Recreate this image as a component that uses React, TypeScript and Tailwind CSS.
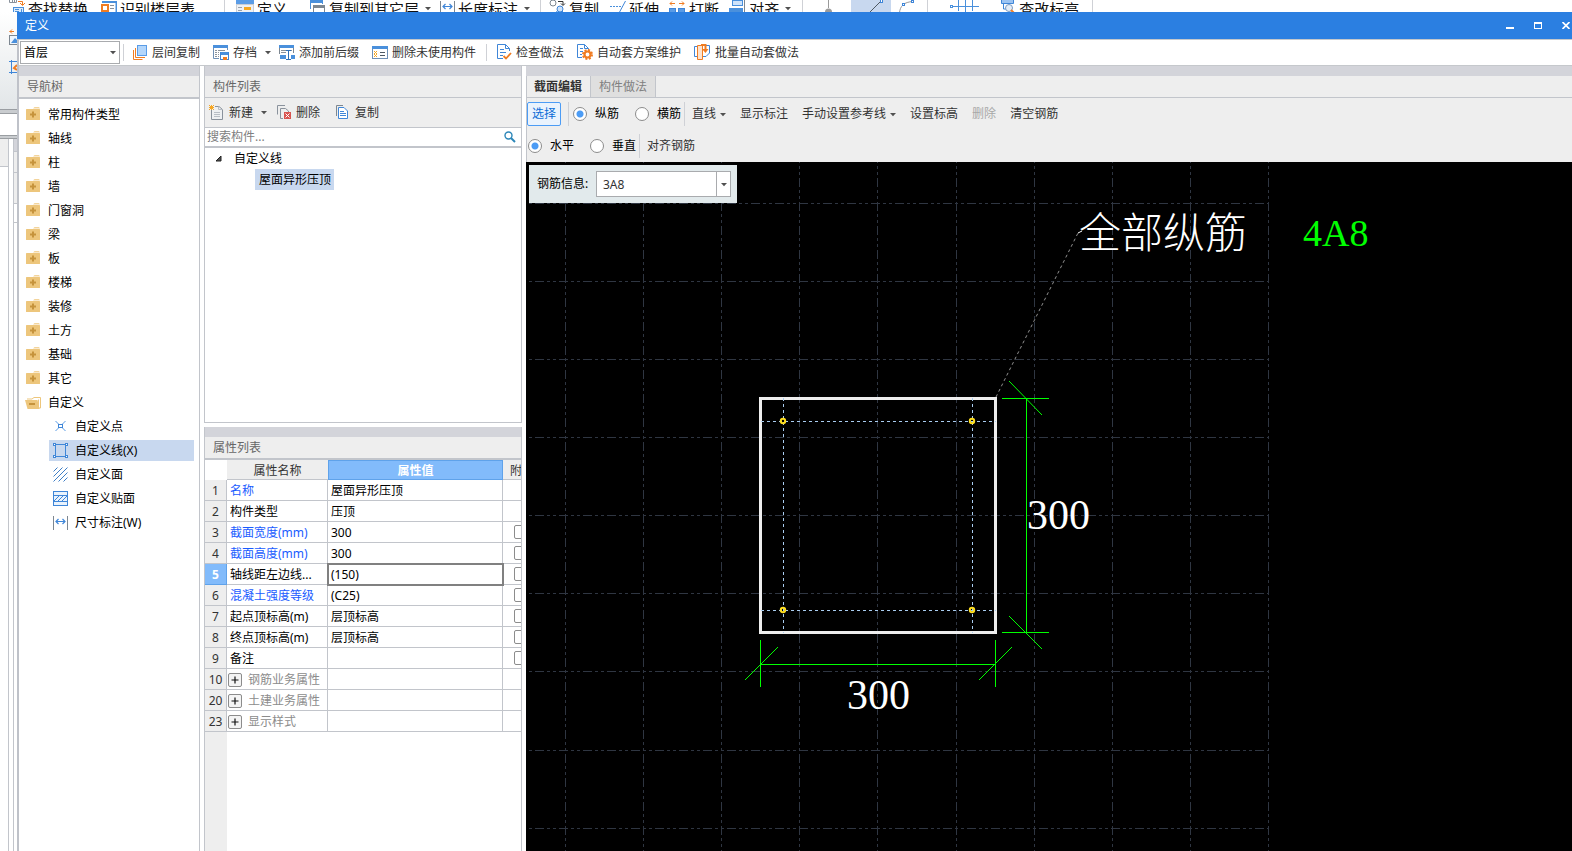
import React, { useState } from "react";

type IconProps = { className?: string };

const Svg = ({ w = 16, h = 16, className = "", children }: { w?: number; h?: number; className?: string; children: React.ReactNode }) => (
  <svg width={w} height={h} viewBox={`0 0 ${w} ${h}`} fill="none" aria-hidden="true" className={`shrink-0 ${className}`}>
    {children}
  </svg>
);

const Caret = ({ className = "" }: IconProps) => (
  <Svg w={6} h={5} className={className}>
    <path d="M0 1H6L3 4.2Z" fill="#505050" />
  </Svg>
);

const Divider = ({ className = "" }: IconProps) => <span className={`w-px shrink-0 bg-[#cfd1d6] ${className}`} />;

/* ---------- ribbon icons ---------- */

const FindReplaceIcon = () => (
  <Svg w={16} h={16}>
    <path d="M0.500 0V2.500H7.500V0M3.500 0V2M5.500 0V2" stroke="#8a929c" />
    <path d="M9 1.500H13.500V5M11 3L13.500 5.500L16 3" stroke="#f07c22" />
    <rect x="4.500" y="7.500" width="10" height="8" fill="#dcebfb" stroke="#4a90dc" />
    <path d="M6 9.500H10M6 11.500H10M6 13.500H10M12.500 9V15" stroke="#4a90dc" />
  </Svg>
);
const FloorTableIcon = () => (
  <Svg w={16} h={16}>
    <path d="M1 2H15.500V12" stroke="#4a90dc" strokeWidth="2" />
    <rect x="0" y="4" width="8" height="8" fill="#f07c22" />
    <rect x="2" y="6" width="4" height="4" fill="#fff" />
    <path d="M9 5.500H13M9 8.500H13" stroke="#8a929c" />
  </Svg>
);
const DefineIcon = () => (
  <Svg w={18} h={16}>
    <rect x="0" y="0" width="18" height="4" fill="#5a9ce6" />
    <rect x="0.500" y="4.500" width="17" height="11" fill="#eef1f5" stroke="#c9ced6" />
    <rect x="8" y="7" width="7" height="3" fill="#f6a821" />
    <path d="M2 7.500H6M2 10.500H6" stroke="#9aa2ac" />
  </Svg>
);
const CopyFloorIcon = () => (
  <Svg w={16} h={16}>
    <path d="M0.500 9V0.500H12.500V4" stroke="#4a90dc" />
    <rect x="0" y="0" width="13" height="3" fill="#4a90dc" />
    <rect x="3.500" y="6.500" width="11" height="7" fill="#fff" stroke="#7d8791" />
    <rect x="3" y="5" width="12" height="3" fill="#7d8791" />
  </Svg>
);
const LengthIcon = ({ tall = false }: { tall?: boolean }) => (
  <Svg w={15} h={tall ? 15 : 16}>
    <path d="M0.500 1V15M14.500 1V15" stroke="#7d8791" />
    <path d="M3 6.500H12M5.500 4L3 6.500L5.500 9M9.500 4L12 6.500L9.500 9" stroke="#3f86d8" strokeWidth="1.200" />
  </Svg>
);
const CopyShapesIcon = () => (
  <Svg w={17} h={16}>
    <circle cx="4" cy="3" r="3" stroke="#7d8791" />
    <path d="M9 1.500H14V5M12 3.500L14 5.500L16 3.500" stroke="#333" />
    <circle cx="11" cy="9" r="3" fill="#cfe3fa" stroke="#3f86d8" />
    <path d="M5 15L9 10M13 11L16 14" stroke="#3f86d8" />
  </Svg>
);
const ExtendIcon = () => (
  <Svg w={16} h={16}>
    <path d="M0 6.500H11" stroke="#4a90dc" strokeDasharray="2 1" />
    <path d="M15.500 1L8.500 14" stroke="#3f86d8" />
  </Svg>
);
const BreakIcon = () => (
  <Svg w={17} h={16}>
    <path d="M1 3.500H6M3 1.500L1 3.500L3 5.500M10 3.500H15M13 1.500L15 3.500L13 5.500" stroke="#f07c22" />
    <rect x="0.500" y="8.500" width="6" height="6" fill="#5a9ce6" stroke="#3f86d8" />
    <rect x="9.500" y="8.500" width="6" height="6" fill="#5a9ce6" stroke="#3f86d8" />
  </Svg>
);
const AlignIcon = () => (
  <Svg w={17} h={16}>
    <rect x="3.500" y="0.500" width="10" height="5" fill="#cfe3fa" stroke="#4a90dc" />
    <rect x="0" y="8" width="14" height="6" fill="#4a90dc" />
    <path d="M15.500 0V14" stroke="#7d8791" />
  </Svg>
);
const CheckHeightIcon = () => (
  <Svg w={16} h={16}>
    <path d="M1.500 0V3.500H13.500V0" fill="#9cc4f2" stroke="#3f86d8" />
    <path d="M3.500 4V9H8" stroke="#3f86d8" />
    <circle cx="9" cy="8" r="3.500" fill="#e5edf6" stroke="#7b9cc4" />
    <path d="M11 10L14 13" stroke="#f07c22" strokeWidth="2" />
  </Svg>
);

/* ---------- dialog toolbar icons ---------- */

const LayersIcon = () => (
  <Svg w={15} h={15}>
    <path d="M0.500 5V14.500H9.500" stroke="#f07c22" />
    <path d="M2.500 3V12.500H12" stroke="#f07c22" />
    <rect x="4.500" y="0.500" width="9" height="10" fill="#b3d6fb" stroke="#5a9ce6" />
  </Svg>
);
const ArchiveIcon = () => (
  <Svg w={16} h={17}>
    <path d="M0.500 2V14.500H6M14.500 2V6" stroke="#6f8fb5" />
    <rect x="0" y="1" width="15" height="3" fill="#4a90dc" />
    <path d="M2 6.500H4M5 6.500H12M2 8.500H4M2 10.500H4M2 12.500H4M5 8.500H6M5 10.500H6M5 12.500H6" stroke="#8a929c" />
    <rect x="7.500" y="8.500" width="8" height="7" fill="#fff" stroke="#3f86d8" />
    <rect x="8" y="8" width="7" height="3" fill="#4a90dc" />
    <rect x="10" y="13" width="4" height="3" fill="#f07c22" />
  </Svg>
);
const PrefixIcon = () => (
  <Svg w={16} h={17}>
    <path d="M0.500 2V10M14.500 2V9" stroke="#7d8791" />
    <rect x="0" y="1" width="15" height="3" fill="#4a90dc" />
    <path d="M2 6.500H7M2 8.500H7M12 6.500H13" stroke="#8a929c" />
    <rect x="1" y="11" width="6" height="4" fill="#4a90dc" />
    <rect x="12" y="11" width="4" height="4" fill="#4a90dc" />
    <path d="M7 6.500H12M9.500 6.500V15.500M7 15.500H12" stroke="#2f70b8" />
  </Svg>
);
const DeleteUnusedIcon = () => (
  <Svg w={16} h={15}>
    <rect x="0.500" y="1.500" width="15" height="12" fill="#fff" stroke="#6f8fb5" />
    <rect x="0" y="1" width="16" height="3" fill="#4a90dc" />
    <path d="M2 6L5 9M5 6L2 9M2 9L5 12M5 9L2 12" stroke="#f5a623" />
    <path d="M8 7.500H13M8 10.500H13" stroke="#4f5963" />
  </Svg>
);
const CheckDocIcon = () => (
  <Svg w={15} h={17}>
    <path d="M12.500 7V4.500L8.500 0.500H0.500V14.500H6" fill="#fff" stroke="#3f86d8" />
    <path d="M8.500 0.500V4.500H12.500M3 5.500H7M3 8.500H9M3 11.500H6" stroke="#3f86d8" />
    <path d="M6.500 12L9 14.500L14 9" stroke="#f07c22" strokeWidth="1.800" />
  </Svg>
);
const GearDocIcon = () => (
  <Svg w={16} h={17}>
    <path d="M11.500 6V4.500L7.500 0.500H0.500V13.500H5" fill="#fff" stroke="#3f86d8" />
    <path d="M7.500 0.500V4.500H11.500M3 4.500H6M3 7.500H6M3 10.500H5" stroke="#3f86d8" />
    <circle cx="10.500" cy="10.500" r="4.500" stroke="#f07c22" strokeWidth="2" strokeDasharray="2 1.530" />
    <circle cx="10.500" cy="10.500" r="3" fill="#fff" stroke="#f07c22" strokeWidth="2.200" />
  </Svg>
);
const BatchIcon = () => (
  <Svg w={17} h={17}>
    <path d="M3 2.500H0.500V12.500H3M12 1.500H15.500V9L12 12.500H9" stroke="#3f86d8" />
    <path d="M3.500 1.500H8.500V15.500H3.500Z" fill="#fde3cf" stroke="#f07c22" />
    <path d="M7 1H11.500V7" stroke="#f07c22" strokeWidth="2" />
    <path d="M8 5L11.500 9L14.500 5Z" fill="#f07c22" />
  </Svg>
);

/* ---------- list icons ---------- */

const NewIcon = () => (
  <Svg w={16} h={15}>
    <path d="M2.500 5V14.500H13.500V4.500L10 1.500H6" fill="#eef0f2" stroke="#8a929c" />
    <path d="M9.500 1.500V4.500H13.500M5 7.500H11M5 9.500H11M5 11.500H11" stroke="#b8bec5" />
    <path d="M0 0L5 5M5 0L0 5M2.500 0V5M0 2.500H5" stroke="#f5a623" />
  </Svg>
);
const DeleteIcon = () => (
  <Svg w={15} h={15}>
    <path d="M0.500 9.500V0.500H8M6 13.500H3.500V3.500H8.500L11.500 6V7" stroke="#8a929c" />
    <rect x="7" y="7" width="7" height="7" fill="#d9534f" />
    <path d="M8.500 8.500L12.500 12.500M12.500 8.500L8.500 12.500" stroke="#fff" />
  </Svg>
);
const CopyIcon = () => (
  <Svg w={15} h={15}>
    <path d="M0.500 11V0.500H7" stroke="#7d8791" />
    <path d="M2.500 2.500H8L11.500 6V13.500H2.500Z" fill="#fff" stroke="#3f86d8" />
    <path d="M4 6.500H8M4 8.500H10M4 10.500H10" stroke="#3f86d8" />
  </Svg>
);
const SearchIcon = () => (
  <Svg w={12} h={12}>
    <circle cx="4.500" cy="4.500" r="3.500" stroke="#2c86b8" strokeWidth="1.400" />
    <path d="M7 7L11 11" stroke="#2c86b8" strokeWidth="2" />
  </Svg>
);

/* ---------- navigation icons ---------- */

const FolderIcon = () => (
  <Svg w={14} h={16}>
    <path d="M7 1.500L8.500 0H13L14 1.500Z" fill="#f3d49b" />
    <rect x="0" y="2" width="14" height="11" rx="0.500" fill="#edc67c" />
    <path d="M7 4.500V10.500M4 7.500H10" stroke="#c6933c" strokeWidth="2" />
  </Svg>
);
const FolderOpenIcon = () => (
  <Svg w={16} h={12}>
    <path d="M2 2H7L9 0.500H15.500V11H13.500V2.500" stroke="#edc67c" />
    <path d="M0 3H12.500L14.500 12H2.500Z" fill="#edc67c" />
    <path d="M4 7H10" stroke="#c6933c" strokeWidth="2" />
  </Svg>
);
const PointIcon = () => (
  <Svg w={15} h={15}>
    <path d="M2.500 2L6 5.500M12.500 2L9 5.500M2.500 12L6 8.500M12.500 12L9 8.500" stroke="#5a9ce6" />
    <rect x="5.500" y="5.500" width="4" height="3" stroke="#3f86d8" />
  </Svg>
);
const LineIcon = () => (
  <Svg w={15} h={15}>
    <path d="M2.500 3V12M12.500 3V12M3 1.500H12M3 13.500H12" stroke="#3f86d8" />
    <rect x="0.500" y="0.500" width="2" height="2" fill="#fff" stroke="#3f86d8" />
    <rect x="12.500" y="0.500" width="2" height="2" fill="#fff" stroke="#3f86d8" />
    <rect x="0.500" y="12.500" width="2" height="2" fill="#fff" stroke="#3f86d8" />
    <rect x="12.500" y="12.500" width="2" height="2" fill="#fff" stroke="#3f86d8" />
  </Svg>
);
const FaceIcon = () => (
  <Svg w={15} h={15}>
    <path d="M0.500 4.500L4.500 0.500M0.500 9.500L9.500 0.500M0.500 14.500L14.500 0.500M5.500 14.500L14.500 5.500M10.500 14.500L14.500 10.500" stroke="#3f7fc6" />
  </Svg>
);
const VeneerIcon = () => (
  <Svg w={15} h={15}>
    <rect x="0.500" y="0.500" width="14" height="14" fill="#eaf3fd" stroke="#3f86d8" />
    <path d="M0 4.500H15M0 10.500H15" stroke="#3f86d8" />
    <path d="M1 10L6 5M5 10L10 5M9 10L14 5" stroke="#3f86d8" />
  </Svg>
);

/* ---------- ribbon of the main window ---------- */

const RibbonItem = ({ icon, label, caret, className }: { icon: React.ReactNode; label: string; caret?: boolean; className: string }) => (
  <button type="button" className={`flex h-[18px] shrink-0 items-start gap-[3px] whitespace-nowrap text-[15px] leading-[18px] text-[#111] ${className}`}>
    {icon}
    <span>{label}</span>
    {caret && <Caret className="mt-[6px] ml-[3px]" />}
  </button>
);

const Ribbon = () => (
  <header className="flex h-3 shrink-0 items-start overflow-hidden bg-white pl-[9px]">
    <RibbonItem icon={<FindReplaceIcon />} label="查找替换" className="" />
    <RibbonItem icon={<FloorTableIcon />} label="识别楼层表" className="ml-[13px]" />
    <Divider className="ml-[29px] h-5" />
    <RibbonItem icon={<DefineIcon />} label="定义" className="ml-[11px]" />
    <RibbonItem icon={<CopyFloorIcon />} label="复制到其它层" caret className="ml-[23px]" />
    <RibbonItem icon={<LengthIcon />} label="长度标注" caret className="ml-[9px]" />
    <Divider className="ml-[10px] h-5" />
    <RibbonItem icon={<CopyShapesIcon />} label="复制" className="ml-[8px]" />
    <RibbonItem icon={<ExtendIcon />} label="延伸" className="ml-[11px]" />
    <RibbonItem icon={<BreakIcon />} label="打断" className="ml-[10px]" />
    <RibbonItem icon={<AlignIcon />} label="对齐" caret className="ml-[10px]" />
    <Divider className="ml-[11px] h-5" />
    <Svg w={8} h={16} className="ml-[21px]">
      <path d="M4.500 0V8" stroke="#9a9a9a" />
      <circle cx="4.500" cy="12" r="3.500" fill="#9a9a9a" />
    </Svg>
    <span className="ml-[19px] flex h-5 w-10 shrink-0 justify-center bg-[#c8d8ef]">
      <Svg w={24} h={16}>
        <path d="M10 13L22 1" stroke="#4f5963" />
        <rect x="21.500" y="-0.500" width="2" height="3" fill="#fff" stroke="#3f86d8" />
      </Svg>
    </span>
    <Svg w={17} h={16} className="ml-[7px]">
      <path d="M1.500 13C2 6 6 2 15 1.500" stroke="#9a9a9a" />
      <rect x="4.500" y="3.500" width="2" height="2" fill="#fff" stroke="#3f86d8" />
      <rect x="13.500" y="0.500" width="2" height="2" fill="#fff" stroke="#3f86d8" />
    </Svg>
    <Divider className="ml-[12px] h-5" />
    <Svg w={29} h={16} className="ml-[22px]">
      <path d="M2 6.500H29M8.500 0V11M15.500 0V16M22.500 0V11" stroke="#4a90dc" />
      <rect x="0.500" y="5.500" width="2" height="2" fill="#fff" stroke="#4a90dc" />
    </Svg>
    <RibbonItem icon={<CheckHeightIcon />} label="查改标高" className="ml-[21px]" />
    <Divider className="ml-[13px] h-5" />
  </header>
);

/* Visible edge of the main window to the left of the dialog. */
const WindowEdge = () => (
  <div className="flex w-[17px] shrink-0 flex-col overflow-hidden bg-white">
    <div className="flex h-[97px] shrink-0 flex-col items-end gap-[15px] bg-linear-to-b from-white to-[#e2e6e8] pt-[17px]">
      <Svg w={8} h={16}>
        <path d="M0.500 2.500H5M3 0.500L1 2.500L3 4.500" stroke="#f07c22" />
        <rect x="0.500" y="6.500" width="12" height="9" fill="#eef5fd" stroke="#7d8791" />
        <path d="M2 14L6 9L8 11V14Z" fill="#4a90dc" />
      </Svg>
      <Svg w={8} h={14}>
        <path d="M2.500 0V14M0 1.500H8M0 12.500H8" stroke="#3f86d8" />
        <path d="M8 5L5 8L8 10" stroke="#f07c22" strokeWidth="2" />
      </Svg>
    </div>
    <div className="h-[5px] shrink-0 border-y border-[#9a9ea2] bg-[#c9cccf]" />
    <div className="h-[21px] shrink-0" />
    <div className="h-[4px] shrink-0 border-y border-[#9a9ea2] bg-[#c9cccf]" />
    <div className="flex flex-1">
      <div className="w-[9px] shrink-0 border-r border-[#c2c5cb]">
        <div className="h-7 border-b border-[#c2c5cb] bg-[#eeeeee]" />
      </div>
      <div className="w-[5px] shrink-0 border-r border-[#c2c5cb]" />
      <div className="flex-1">
        <div className="h-3 bg-[#d3d4da]" />
        <div className="h-[22px] border-y border-[#c2c5cb] bg-[#eeeeee]" />
        <div className="h-[30px] bg-[#eeeeee]" />
        <div className="h-5 border-y border-[#c2c5cb]" />
      </div>
    </div>
  </div>
);

/* ---------- dialog ---------- */

const TitleBar = () => (
  <div className="flex h-[27px] shrink-0 items-center bg-[#2b7fe1] pl-2 pr-[2px] text-white">
    <h1 className="flex-1">定义</h1>
    <div className="flex items-center gap-5">
      <button type="button" aria-label="最小化" className="block">
        <Svg w={8} h={7}><path d="M0 6H8" stroke="#fff" strokeWidth="2" /></Svg>
      </button>
      <button type="button" aria-label="最大化" className="block">
        <Svg w={8} h={7}><path d="M0 1H8" stroke="#fff" strokeWidth="2" /><rect x="0.500" y="0.500" width="7" height="6" stroke="#fff" /></Svg>
      </button>
      <button type="button" aria-label="关闭" className="block">
        <Svg w={8} h={7}><path d="M0.500 0L7.500 7M7.500 0L0.500 7" stroke="#fff" strokeWidth="1.700" /></Svg>
      </button>
    </div>
  </div>
);

const ToolButton = ({ icon, label, caret }: { icon: React.ReactNode; label: string; caret?: boolean }) => (
  <button type="button" className="flex h-[23px] shrink-0 items-center gap-1 whitespace-nowrap text-[#333]">
    {icon}
    <span>{label}</span>
    {caret && <Caret className="ml-1" />}
  </button>
);

const Toolbar = () => (
  <div className="flex h-[27px] shrink-0 items-center border-y border-[#c5c8cc] bg-white pl-px">
    <div className="relative h-[23px] w-[100px] shrink-0">
      <select aria-label="楼层" className="h-full w-full appearance-none border border-[#a9abae] bg-white pl-[3px] text-black">
        <option>首层</option>
      </select>
      <Caret className="pointer-events-none absolute top-[9px] right-1" />
    </div>
    <Divider className="ml-[3px] h-[17px]" />
    <div className="ml-[9px] flex items-center gap-[13px]">
      <ToolButton icon={<LayersIcon />} label="层间复制" />
      <div className="flex items-center gap-2">
        <ToolButton icon={<ArchiveIcon />} label="存档" caret />
        <ToolButton icon={<PrefixIcon />} label="添加前后缀" />
      </div>
      <ToolButton icon={<DeleteUnusedIcon />} label="删除未使用构件" />
    </div>
    <Divider className="mx-[10px] h-[17px]" />
    <div className="flex items-center gap-[13px]">
      <ToolButton icon={<CheckDocIcon />} label="检查做法" />
      <ToolButton icon={<GearDocIcon />} label="自动套方案维护" />
      <ToolButton icon={<BatchIcon />} label="批量自动套做法" />
    </div>
  </div>
);

const PanelHeader = ({ title }: { title: string }) => (
  <>
    <div className="h-[10px] shrink-0 bg-[#d3d4da]" />
    <h2 className="flex h-[22px] shrink-0 items-center border-b border-[#c2c5cb] bg-[#eeeeee] pl-2 text-[#666]">{title}</h2>
  </>
);

const categories = ["常用构件类型", "轴线", "柱", "墙", "门窗洞", "梁", "板", "楼梯", "装修", "土方", "基础", "其它"];

const customItems = [
  { label: "自定义点", icon: <PointIcon /> },
  { label: "自定义线(X)", icon: <LineIcon />, selected: true },
  { label: "自定义面", icon: <FaceIcon /> },
  { label: "自定义贴面", icon: <VeneerIcon /> },
  { label: "尺寸标注(W)", icon: <LengthIcon tall /> },
];

const NavPanel = () => (
  <nav className="flex w-[181px] shrink-0 flex-col border-r border-[#c2c5cb] bg-white">
    <PanelHeader title="导航树" />
    <ul className="border-t border-[#c2c5cb] pt-1 text-black">
      {categories.map((name) => (
        <li key={name}>
          <button type="button" className="flex h-6 w-full items-center gap-2 pl-[7px]">
            <FolderIcon />
            {name}
          </button>
        </li>
      ))}
      <li>
        <button type="button" className="flex h-6 w-full items-center gap-[7px] pl-[6px]">
          <FolderOpenIcon />
          自定义
        </button>
        <ul>
          {customItems.map((item) => (
            <li key={item.label} className="flex h-6 items-start pt-px pr-[5px] pl-[30px]">
              <button
                type="button"
                className={`flex h-[21px] w-full items-center gap-[7px] pl-1 ${item.selected ? "bg-[#c8d8ef]" : ""}`}
              >
                {item.icon}
                {item.label}
              </button>
            </li>
          ))}
        </ul>
      </li>
    </ul>
  </nav>
);

const ComponentList = () => (
  <section className="flex h-[357px] shrink-0 flex-col border-x border-b border-[#c2c5cb] bg-white">
    <PanelHeader title="构件列表" />
    <div className="flex h-[30px] shrink-0 items-center border-b border-[#c2c5cb] bg-[#eeeeee] pl-1">
      <ToolButton icon={<NewIcon />} label="新建" caret />
      <span className="ml-[10px] flex gap-4">
        <ToolButton icon={<DeleteIcon />} label="删除" />
        <ToolButton icon={<CopyIcon />} label="复制" />
      </span>
    </div>
    <div className="flex h-5 shrink-0 items-center border-b-2 border-[#c2c5cb] pr-[5px] pl-[2px]">
      <input aria-label="搜索构件" placeholder="搜索构件..." className="h-4 min-w-0 flex-1 outline-none placeholder:text-[#808080]" />
      <button type="button" aria-label="搜索" className="block"><SearchIcon /></button>
    </div>
    <ul className="text-black">
      <li>
        <div className="flex h-[21px] items-center gap-3 pl-[10px]">
          <Svg w={7} h={7}><path d="M6 1V6H1Z" fill="#555" stroke="#222" /></Svg>
          自定义线
        </div>
        <ul>
          <li className="flex pl-[50px]">
            <button type="button" className="h-[21px] bg-[#c8d8ef] pr-[3px] pl-[4px]">屋面异形压顶</button>
          </li>
        </ul>
      </li>
    </ul>
  </section>
);

type Row = { no: number; name: string; value?: string; link?: boolean; check?: boolean; group?: boolean; active?: boolean };

const rows: Row[] = [
  { no: 1, name: "名称", value: "屋面异形压顶", link: true },
  { no: 2, name: "构件类型", value: "压顶" },
  { no: 3, name: "截面宽度(mm)", value: "300", link: true, check: true },
  { no: 4, name: "截面高度(mm)", value: "300", link: true, check: true },
  { no: 5, name: "轴线距左边线...", value: "(150)", check: true, active: true },
  { no: 6, name: "混凝土强度等级", value: "(C25)", link: true, check: true },
  { no: 7, name: "起点顶标高(m)", value: "层顶标高", check: true },
  { no: 8, name: "终点顶标高(m)", value: "层顶标高", check: true },
  { no: 9, name: "备注", check: true },
  { no: 10, name: "钢筋业务属性", group: true },
  { no: 20, name: "土建业务属性", group: true },
  { no: 23, name: "显示样式", group: true },
];

const PropertyList = () => (
  <section className="mt-1 flex min-h-0 flex-1 flex-col border-x border-[#c2c5cb] bg-white">
    <PanelHeader title="属性列表" />
    <table className="w-full table-fixed border-separate border-spacing-0 border-t border-[#c2c5cb] text-left text-black">
      <colgroup>
        <col className="w-[22px]" />
        <col className="w-[101px]" />
        <col className="w-[175px]" />
        <col />
      </colgroup>
      <thead>
        <tr className="h-5 text-[#333]">
          <th className="p-0" aria-label="序号" />
          <th className="border-b border-[#c2c5cb] bg-[#eeeeee] p-0 pt-[2px] text-center font-normal">属性名称</th>
          <th className="border border-[#5fa2ea] bg-[#82bbfb] p-0 pt-[2px] text-center font-bold text-white">属性值</th>
          <th className="overflow-hidden border-b border-[#c2c5cb] bg-[#eeeeee] p-0 pt-[2px] pl-[7px] font-normal whitespace-nowrap">附加</th>
        </tr>
      </thead>
      <tbody>
        {rows.map((r) => (
          <tr key={r.no} className="h-[21px]">
            <td
              className={`border-r border-b p-0 pt-[2px] text-center ${
                r.active ? "border-[#5fa2ea] bg-[#82bbfb] font-bold text-white" : "border-[#c2c5cb] bg-[#eeeeee] text-[#333]"
              }`}
            >
              {r.no}
            </td>
            <td
              className={`overflow-hidden border-r border-b border-[#c2c5cb] p-0 pt-[2px] whitespace-nowrap ${
                r.group ? "pl-[1px] text-[#8c8c8c]" : r.link ? "pl-[3px] text-[#1a5cff]" : "pl-[3px]"
              }`}
            >
              {r.group ? (
                <span className="flex items-center gap-[6px]">
                  <button type="button" aria-label={`展开${r.name}`} className="flex size-[14px] items-center justify-center rounded-[2px] border border-[#8c8c8c] bg-[#f4f4f4]">
                    <Svg w={8} h={8}><path d="M4 0.500V7.500M0.500 4H7.500" stroke="#111" strokeWidth="1.200" /></Svg>
                  </button>
                  {r.name}
                </span>
              ) : (
                r.name
              )}
            </td>
            <td className={`border-r border-b border-[#c2c5cb] p-0 pt-[2px] pl-[3px] ${r.active ? "outline-2 -outline-offset-1 outline-[#808080]" : ""}`}>{r.value}</td>
            <td className="overflow-hidden border-b border-[#c2c5cb] p-0">
              {r.check && (
                <input type="checkbox" aria-label={`附加${r.name}`} className="ml-[11px] block size-[14px] appearance-none rounded-[2px] border border-[#8c8c8c] bg-white" />
              )}
            </td>
          </tr>
        ))}
      </tbody>
    </table>
    <div className="flex-1">
      <div className="h-full w-[22px] bg-[#eeeeee]" />
    </div>
  </section>
);

const Radio = ({ name, label, checked, onChange }: { name: string; label: string; checked: boolean; onChange: () => void }) => (
  <label className="flex shrink-0 items-center gap-2 whitespace-nowrap text-black">
    <input
      type="radio"
      name={name}
      checked={checked}
      onChange={onChange}
      className="size-[14px] appearance-none rounded-full border border-[#8c8c8c] bg-white checked:bg-[radial-gradient(circle,#4c9cf5_3px,#fff_4px)]"
    />
    {label}
  </label>
);

const FlatButton = ({ label, caret, disabled }: { label: string; caret?: boolean; disabled?: boolean }) => (
  <button type="button" disabled={disabled} className={`flex shrink-0 items-center gap-1 whitespace-nowrap ${disabled ? "text-[#a8a8a8]" : "text-[#333]"}`}>
    {label}
    {caret && <Caret />}
  </button>
);

const columns = [565, 643, 721, 799, 877, 956, 1034, 1112, 1190, 1268];
const lines = [203, 281, 359, 437, 515, 593, 671, 750, 828];

const SectionDrawing = () => (
  <svg width="1046" height="689" viewBox="526 162 1046 689" fill="none" className="block max-w-none">
    <g stroke="#2f3642" strokeDasharray="9 3 3 3 3 3" shapeRendering="crispEdges">
      {columns.map((x) => (
        <path key={x} d={`M${x + 0.5} 162V851`} strokeDashoffset="8" />
      ))}
      {lines.map((y) => (
        <path key={y} d={`M528 ${y + 0.5}H1269`} strokeDashoffset="17" />
      ))}
    </g>
    <rect x="760.500" y="398.500" width="235" height="234" stroke="#eeeeee" strokeWidth="3" />
    <path d="M761 421.500H996M761 610.500H996M783.500 398V633M972.500 398V633" stroke="#a9cdf0" strokeDasharray="3 3" />
    <g stroke="#ffdf20" strokeWidth="2">
      <circle cx="783" cy="421" r="2.200" />
      <circle cx="972" cy="421" r="2.200" />
      <circle cx="783" cy="610" r="2.200" />
      <circle cx="972" cy="610" r="2.200" />
    </g>
    <path d="M996 397L1078 233" stroke="#909090" strokeDasharray="3 3" />
    <path d="M1078 233L1082 231" stroke="#fff" />
    <g stroke="#00ff00">
      <path d="M1026.500 398V633M1002 398.500H1049M1002 632.500H1049M1009 381L1042 415M1009 616L1042 649" />
      <path d="M760 664.500H996M760.500 640V687M995.500 640V687M745 680L778 647M979 680L1012 647" />
    </g>
    <g fill="#fff" className="font-['Liberation_Serif','Noto_Sans_CJK_SC',serif] text-[42px]">
      <text x="1027" y="529">300</text>
      <text x="847" y="709">300</text>
      <text x="1079" y="248" className="font-light">全部纵筋</text>
    </g>
    <text x="1303" y="246" fill="#00ff00" className="font-['Liberation_Serif',serif] text-[38px]">4A8</text>
  </svg>
);

const Editor = () => {
  const [kind, setKind] = useState("纵筋");
  const [direction, setDirection] = useState("水平");
  return (
    <main className="flex min-w-0 flex-1 flex-col bg-[#eeeeee]">
      <div className="h-[10px] shrink-0 bg-[#d3d4da]" />
      <div role="tablist" className="flex h-[22px] shrink-0 border-b border-l border-[#c2c5cb]">
        <button type="button" role="tab" aria-selected="true" className="border-r border-[#c2c5cb] pr-2 pl-[7px] font-bold text-[#333]">截面编辑</button>
        <button type="button" role="tab" aria-selected="false" className="border-r border-[#c2c5cb] bg-[#dfdfdf] px-2 text-[#808080]">构件做法</button>
      </div>
      <div className="flex h-8 shrink-0 items-center border-l border-[#c2c5cb]">
        <button type="button" className="h-6 shrink-0 rounded-[2px] border border-[#4c9cf5] bg-[#eaf3fd] px-[4px] text-[#0a6cd6]">选择</button>
        <Divider className="ml-[7px] h-6" />
        <div className="ml-1 flex gap-4">
          <Radio name="kind" label="纵筋" checked={kind === "纵筋"} onChange={() => setKind("纵筋")} />
          <Radio name="kind" label="横筋" checked={kind === "横筋"} onChange={() => setKind("横筋")} />
        </div>
        <Divider className="ml-[3px] h-6" />
        <div className="ml-[7px] flex gap-[14px]">
          <FlatButton label="直线" caret />
          <FlatButton label="显示标注" />
          <FlatButton label="手动设置参考线" caret />
          <FlatButton label="设置标高" />
          <FlatButton label="删除" disabled />
          <FlatButton label="清空钢筋" />
        </div>
      </div>
      <div className="flex h-8 shrink-0 items-center border-l border-[#c2c5cb] pl-px">
        <div className="flex gap-4">
          <Radio name="direction" label="水平" checked={direction === "水平"} onChange={() => setDirection("水平")} />
          <Radio name="direction" label="垂直" checked={direction === "垂直"} onChange={() => setDirection("垂直")} />
        </div>
        <Divider className="mr-[7px] ml-[3px] h-6" />
        <FlatButton label="对齐钢筋" />
      </div>
      <div className="relative min-h-0 flex-1 overflow-hidden bg-black">
        <SectionDrawing />
        <div className="absolute top-[3px] left-[3px] flex h-[38px] w-[208px] items-center bg-[#e2eaec] pr-[6px] pl-2">
          <label htmlFor="rebar" className="flex-1 whitespace-nowrap text-black">钢筋信息:</label>
          <div className="relative h-[26px] w-[135px]">
            <select id="rebar" className="h-full w-full appearance-none border border-[#a9abae] bg-white pt-[2px] pl-[6px] text-[#333]">
              <option>3A8</option>
            </select>
            <span className="pointer-events-none absolute top-px right-px flex h-6 w-[14px] items-center justify-center border-l border-[#a9abae]">
              <Caret />
            </span>
          </div>
        </div>
      </div>
    </main>
  );
};

export default function App() {
  return (
    <div className="flex h-screen flex-col overflow-hidden bg-white font-['Noto_Sans','Noto_Sans_CJK_SC',sans-serif] text-[12px] leading-4">
      <Ribbon />
      <div className="flex min-h-0 flex-1">
        <WindowEdge />
        <div className="flex min-w-0 flex-1 flex-col">
          <TitleBar />
          <div className="flex min-h-0 flex-1 flex-col border-l-2 border-[#bfc2c9]">
            <Toolbar />
            <div className="flex min-h-0 flex-1 gap-1">
              <NavPanel />
              <div className="flex w-[318px] shrink-0 flex-col">
                <ComponentList />
                <PropertyList />
              </div>
              <Editor />
            </div>
          </div>
        </div>
      </div>
    </div>
  );
}
